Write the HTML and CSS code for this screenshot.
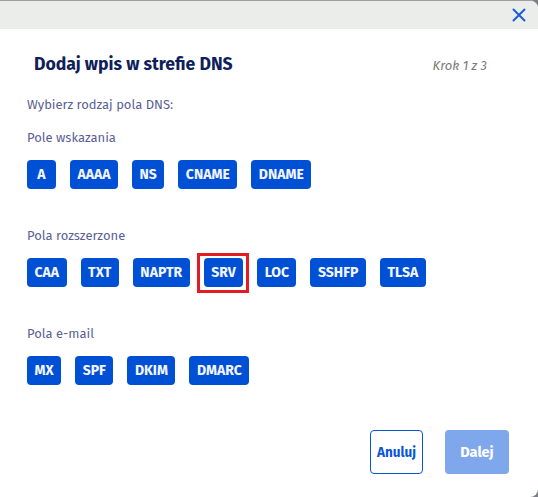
FILE: index.html
```html
<!DOCTYPE html>
<html lang="pl">
<head>
<meta charset="utf-8">
<link rel="stylesheet" href="styles.css">
</head>
<body>
<div class="modal">
  <div class="topbar">
    <button class="close" aria-label="Zamknij">
      <svg width="14" height="14" viewBox="0 0 14 14"><path d="M1.5 1.5 L12.5 12.5 M12.5 1.5 L1.5 12.5" stroke="#1a5fd8" stroke-width="2" stroke-linecap="round" fill="none"/></svg>
    </button>
  </div>
  <div class="content">
    <div class="title-row">
      <h1 class="title">Dodaj wpis w strefie DNS</h1>
      <span class="step">Krok 1 z 3</span>
    </div>
    <p class="intro">Wybierz rodzaj pola DNS:</p>

    <p class="group-label">Pole wskazania</p>
    <div class="chips">
      <button class="chip">A</button>
      <button class="chip">AAAA</button>
      <button class="chip">NS</button>
      <button class="chip">CNAME</button>
      <button class="chip">DNAME</button>
    </div>

    <p class="group-label spaced">Pola rozszerzone</p>
    <div class="chips">
      <button class="chip">CAA</button>
      <button class="chip">TXT</button>
      <button class="chip">NAPTR</button>
      <button class="chip chip-selected">SRV</button>
      <button class="chip">LOC</button>
      <button class="chip">SSHFP</button>
      <button class="chip">TLSA</button>
    </div>

    <p class="group-label spaced">Pola e-mail</p>
    <div class="chips">
      <button class="chip">MX</button>
      <button class="chip">SPF</button>
      <button class="chip">DKIM</button>
      <button class="chip">DMARC</button>
    </div>

    <div class="footer">
      <button class="btn btn-outline">Anuluj</button>
      <button class="btn btn-disabled">Dalej</button>
    </div>
  </div>
</div>
</body>
</html>
```

FILE: styles.css
```css
* { box-sizing: border-box; }
html, body { margin: 0; padding: 0; }
body {
  background: #7d7f86;
  font-family: "Fira Sans", "Open Sans", "Noto Sans", sans-serif;
  width: 538px;
  height: 497px;
  overflow: hidden;
}
.modal {
  width: 538px;
  height: 497px;
  background: #ffffff;
  border-radius: 0 8px 8px 0;
  overflow: hidden;
  border-top: 1px solid #9c9ea1;
}
.topbar {
  height: 28px;
  background: #ebedea;
  display: flex;
  justify-content: flex-end;
  align-items: center;
  padding-right: 12px;
}
.close {
  border: 0;
  background: transparent;
  padding: 0;
  width: 14px;
  height: 14px;
  display: flex;
}
.content {
  padding: 0 29px 0 27px;
}
.title-row {
  display: flex;
  justify-content: space-between;
  align-items: center;
  margin-top: 24px;
  padding-left: 7px;
  height: 24px;
}
.title {
  margin: 0;
  font-size: 17.6px;
  font-weight: 700;
  color: #0f1f5a;
  line-height: 24px;
}
.step {
  font-size: 13px;
  font-style: italic;
  color: #7a7a7a;
  margin-right: 22px;
}
.intro, .group-label {
  margin: 0;
  font-size: 13px;
  line-height: 18px;
  color: #5b5f96;
}
.intro { margin-top: 19px; }
.group-label { margin-top: 15px; }
.group-label.spaced { margin-top: 38px; }
.chips {
  display: flex;
  gap: 14px;
  margin-top: 13px;
}
.chip {
  position: relative;
  height: 29px;
  min-width: 29px;
  padding: 0 7.5px;
  border: 0;
  border-radius: 4px;
  background: #0050d5;
  color: #f2f5ff;
  font-family: inherit;
  font-size: 14px;
  font-weight: 700;
}
.chip-selected::after {
  content: "";
  position: absolute;
  left: -7px;
  right: -6px;
  top: -5px;
  bottom: -6px;
  border: 3px solid #e31b23;
}
.footer {
  display: flex;
  justify-content: flex-end;
  gap: 22px;
  margin-top: 45px;
}
.btn {
  height: 44px;
  border-radius: 4px;
  font-family: inherit;
  font-size: 13.5px;
  font-weight: 700;
}
.btn-outline {
  width: 53px;
  background: #fff;
  border: 1.5px solid #0a56d8;
  color: #0a56d8;
  padding: 0;
}
.btn-disabled {
  width: 64px;
  background: #7fa7eb;
  border: 0;
  color: #ffffff;
  font-size: 14.5px;
}
```
